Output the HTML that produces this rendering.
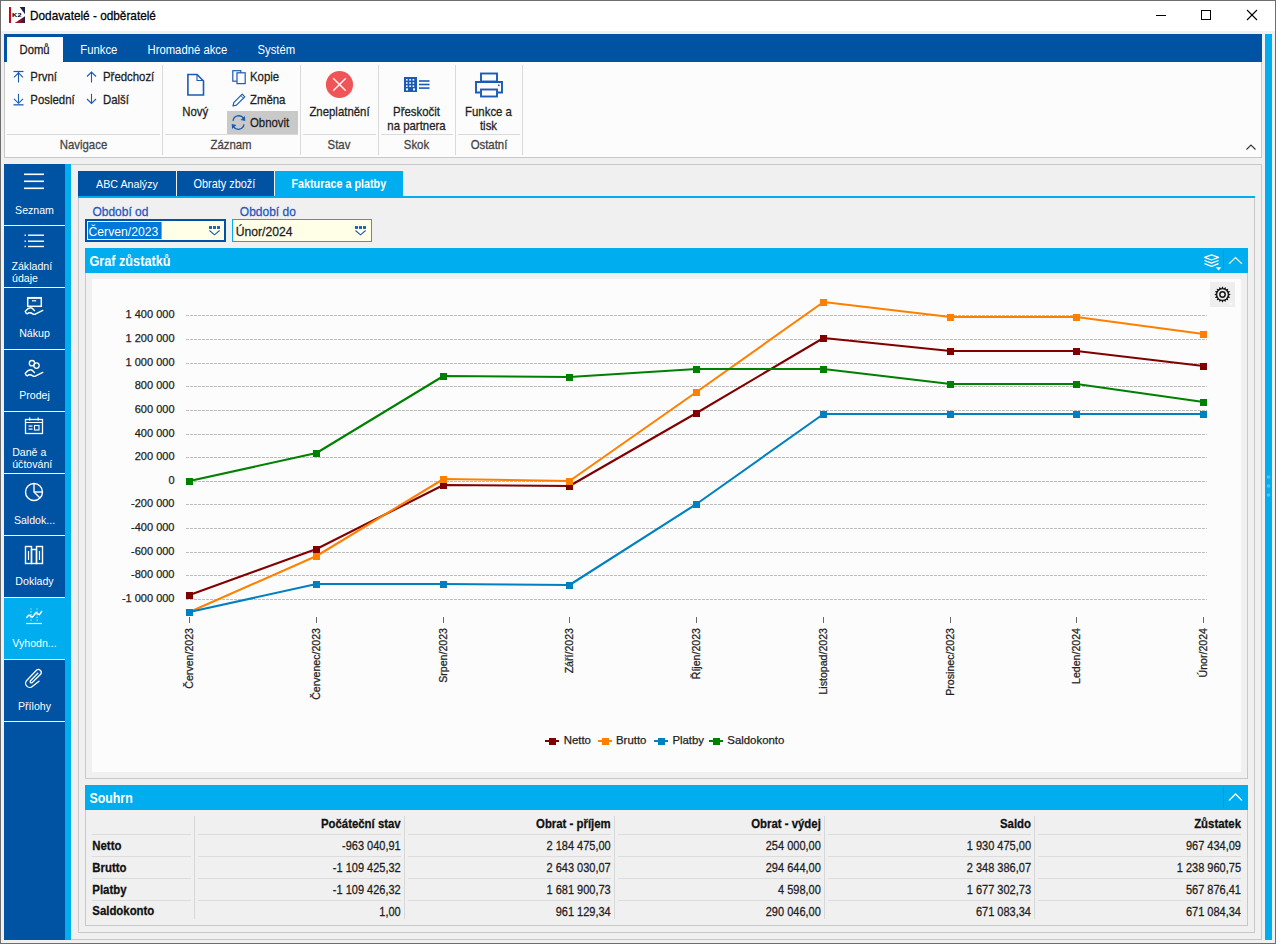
<!DOCTYPE html>
<html><head><meta charset="utf-8"><title>Dodavatelé - odběratelé</title>
<style>
html,body{margin:0;padding:0;width:1276px;height:944px;overflow:hidden;background:#F0F0F0}
body{position:relative;font-family:"Liberation Sans",sans-serif}
body>div{position:absolute}
.t{white-space:nowrap;-webkit-text-stroke:0.25px currentColor}
</style></head><body>
<div style="left:0px;top:0px;width:1276px;height:31px;background:#FFFFFF;"></div>
<div style="left:0px;top:31px;width:1276px;height:913px;background:#F0F0F0;"></div>
<svg style="position:absolute;left:9px;top:7px;" width="16" height="16" viewBox="0 0 16 16"><defs><linearGradient id="k2g" x1="0" y1="0" x2="1" y2="0"><stop offset="0" stop-color="#E0101A"/><stop offset="1" stop-color="#2A1A40"/></linearGradient></defs><rect x="0" y="0" width="2" height="16" fill="#D0001A"/><polygon points="10.7,0 16,0 16,7.2" fill="#1E1E4A"/><polygon points="5.7,16 16,9.2 16,16" fill="url(#k2g)"/><text x="3.1" y="9.9" font-family="Liberation Sans" font-weight="bold" font-size="5.6" fill="#000" textLength="9.4" lengthAdjust="spacingAndGlyphs">K2</text></svg>
<div class="t" style="left:30px;top:10.51px;font-size:11.8px;line-height:11.8px;color:#000;font-weight:normal;transform:scaleY(1.1);transform-origin:0 9.99px;">Dodavatelé - odběratelé</div>
<svg style="position:absolute;left:1150px;top:5px;" width="110" height="22" viewBox="0 0 110 22"><line x1="6" y1="10.5" x2="16" y2="10.5" stroke="#000" stroke-width="1"/><rect x="51.5" y="5.5" width="9" height="9" fill="none" stroke="#000" stroke-width="1"/><line x1="97" y1="5" x2="107" y2="15" stroke="#000" stroke-width="1.1"/><line x1="107" y1="5" x2="97" y2="15" stroke="#000" stroke-width="1.1"/></svg>
<div style="left:4px;top:34px;width:1258px;height:28px;background:#0052A3;"></div>
<div style="left:7px;top:37px;width:56px;height:25px;background:#FCFCFC;"></div>
<div class="t" style="left:19.5px;top:44.93px;font-size:11.3px;line-height:11.3px;color:#1E1E1E;font-weight:normal;transform:scaleY(1.1);transform-origin:0 9.57px;">Domů</div>
<div class="t" style="left:80.3px;top:44.93px;font-size:11.3px;line-height:11.3px;color:#fff;font-weight:normal;transform:scaleY(1.1);transform-origin:0 9.57px;-webkit-text-stroke:0;">Funkce</div>
<div class="t" style="left:147.5px;top:44.93px;font-size:11.3px;line-height:11.3px;color:#fff;font-weight:normal;transform:scaleY(1.1);transform-origin:0 9.57px;-webkit-text-stroke:0;">Hromadné akce</div>
<div class="t" style="left:257.5px;top:44.93px;font-size:11.3px;line-height:11.3px;color:#fff;font-weight:normal;transform:scaleY(1.1);transform-origin:0 9.57px;-webkit-text-stroke:0;">Systém</div>
<div style="left:4px;top:62px;width:1258px;height:96px;background:#FCFCFC;box-sizing:border-box;border:1px solid #C8C8C8;border-top:none"></div>
<div style="left:162px;top:65px;width:1px;height:90px;background:#DADADA;"></div>
<div style="left:300px;top:65px;width:1px;height:90px;background:#DADADA;"></div>
<div style="left:378px;top:65px;width:1px;height:90px;background:#DADADA;"></div>
<div style="left:455px;top:65px;width:1px;height:90px;background:#DADADA;"></div>
<div style="left:522px;top:65px;width:1px;height:90px;background:#DADADA;"></div>
<div style="left:7px;top:134px;width:153px;height:1px;background:#DADADA;"></div>
<div style="left:165px;top:134px;width:133px;height:1px;background:#DADADA;"></div>
<div style="left:303px;top:134px;width:73px;height:1px;background:#DADADA;"></div>
<div style="left:381px;top:134px;width:72px;height:1px;background:#DADADA;"></div>
<div style="left:458px;top:134px;width:62px;height:1px;background:#DADADA;"></div>
<div class="t" style="left:-66.5px;width:300px;top:139.85px;text-align:center;font-size:11.4px;line-height:11.4px;color:#444444;font-weight:normal;transform:scaleY(1.1);transform-origin:0 9.65px;">Navigace</div>
<div class="t" style="left:81px;width:300px;top:139.85px;text-align:center;font-size:11.4px;line-height:11.4px;color:#444444;font-weight:normal;transform:scaleY(1.1);transform-origin:0 9.65px;">Záznam</div>
<div class="t" style="left:189px;width:300px;top:139.85px;text-align:center;font-size:11.4px;line-height:11.4px;color:#444444;font-weight:normal;transform:scaleY(1.1);transform-origin:0 9.65px;">Stav</div>
<div class="t" style="left:266.5px;width:300px;top:139.85px;text-align:center;font-size:11.4px;line-height:11.4px;color:#444444;font-weight:normal;transform:scaleY(1.1);transform-origin:0 9.65px;">Skok</div>
<div class="t" style="left:339px;width:300px;top:139.85px;text-align:center;font-size:11.4px;line-height:11.4px;color:#444444;font-weight:normal;transform:scaleY(1.1);transform-origin:0 9.65px;">Ostatní</div>
<svg style="position:absolute;left:13px;top:69px;" width="12" height="15" viewBox="0 0 12 15"><line x1="0.5" y1="2.5" x2="10.5" y2="2.5" stroke="#1A5BB5" stroke-width="1.2"/><line x1="5.5" y1="3" x2="5.5" y2="13.5" stroke="#1A5BB5" stroke-width="1.1"/><polyline points="1,8.3 5.5,3.8 10,8.3" fill="none" stroke="#1A5BB5" stroke-width="1.1"/></svg>
<div class="t" style="left:30.3px;top:72.35px;font-size:11.4px;line-height:11.4px;color:#1E1E1E;font-weight:normal;transform:scaleY(1.1);transform-origin:0 9.65px;">První</div>
<svg style="position:absolute;left:13px;top:92px;" width="12" height="15" viewBox="0 0 12 15"><line x1="0.5" y1="12.8" x2="10.5" y2="12.8" stroke="#1A5BB5" stroke-width="1.6" opacity="0.8"/><line x1="5.5" y1="1.8" x2="5.5" y2="11" stroke="#1A5BB5" stroke-width="1.1"/><polyline points="1,6.8 5.5,11.3 10,6.8" fill="none" stroke="#1A5BB5" stroke-width="1.1"/></svg>
<div class="t" style="left:30.3px;top:94.85px;font-size:11.4px;line-height:11.4px;color:#1E1E1E;font-weight:normal;transform:scaleY(1.1);transform-origin:0 9.65px;">Poslední</div>
<svg style="position:absolute;left:86px;top:69px;" width="12" height="15" viewBox="0 0 12 15"><line x1="5.5" y1="3" x2="5.5" y2="13.5" stroke="#1A5BB5" stroke-width="1.1"/><polyline points="1,7.5 5.5,3 10,7.5" fill="none" stroke="#1A5BB5" stroke-width="1.1"/></svg>
<div class="t" style="left:103px;top:72.35px;font-size:11.4px;line-height:11.4px;color:#1E1E1E;font-weight:normal;transform:scaleY(1.1);transform-origin:0 9.65px;">Předchozí</div>
<svg style="position:absolute;left:86px;top:92px;" width="12" height="15" viewBox="0 0 12 15"><line x1="5.5" y1="1.8" x2="5.5" y2="11.5" stroke="#1A5BB5" stroke-width="1.1"/><polyline points="1,7 5.5,11.5 10,7" fill="none" stroke="#1A5BB5" stroke-width="1.1"/></svg>
<div class="t" style="left:103px;top:94.85px;font-size:11.4px;line-height:11.4px;color:#1E1E1E;font-weight:normal;transform:scaleY(1.1);transform-origin:0 9.65px;">Další</div>
<svg style="position:absolute;left:185px;top:72px;" width="22" height="26" viewBox="0 0 22 26"><path d="M2.9 2.5 H12 L18.5 9 V23 H2.9 Z" fill="none" stroke="#1A5BB5" stroke-width="1.6"/><path d="M12 2.5 V8.5 H18.5" fill="none" stroke="#1A5BB5" stroke-width="1.1"/></svg>
<div class="t" style="left:182.3px;top:106.85px;font-size:11.4px;line-height:11.4px;color:#1E1E1E;font-weight:normal;transform:scaleY(1.1);transform-origin:0 9.65px;">Nový</div>
<svg style="position:absolute;left:231px;top:69px;" width="16" height="17" viewBox="0 0 16 17"><rect x="1.8" y="1.7" width="8" height="10.5" fill="none" stroke="#1A5BB5" stroke-width="1.2"/><rect x="6" y="3.8" width="8.2" height="10.8" fill="#FCFCFC" stroke="#1A5BB5" stroke-width="1.2"/></svg>
<div class="t" style="left:250px;top:72.35px;font-size:11.4px;line-height:11.4px;color:#1E1E1E;font-weight:normal;transform:scaleY(1.1);transform-origin:0 9.65px;">Kopie</div>
<svg style="position:absolute;left:231px;top:93px;" width="15" height="15" viewBox="0 0 15 15"><path d="M2 13 L2.8 9.6 L11.2 1.2 L13.8 3.8 L5.4 12.2 Z" fill="none" stroke="#1A5BB5" stroke-width="1.2" stroke-linejoin="round"/><line x1="9.8" y1="2.6" x2="12.4" y2="5.2" stroke="#1A5BB5" stroke-width="0.9"/></svg>
<div class="t" style="left:250px;top:94.85px;font-size:11.4px;line-height:11.4px;color:#1E1E1E;font-weight:normal;transform:scaleY(1.1);transform-origin:0 9.65px;">Změna</div>
<div style="left:227px;top:111px;width:71px;height:23px;background:#C9C9C9;"></div>
<svg style="position:absolute;left:231px;top:114px;" width="16" height="16" viewBox="0 0 16 16"><path d="M2 6.8 A5.8 5.8 0 0 1 12.6 4.4" fill="none" stroke="#1A5BB5" stroke-width="1.3"/><polygon points="13.9,2 14.3,7 9.6,6" fill="#1A5BB5"/><path d="M13 10.4 A5.8 5.8 0 0 1 2.4 12.6" fill="none" stroke="#1A5BB5" stroke-width="1.3"/><polygon points="1.1,15 0.7,10 5.4,11" fill="#1A5BB5"/></svg>
<div class="t" style="left:250px;top:117.85px;font-size:11.4px;line-height:11.4px;color:#1E1E1E;font-weight:normal;transform:scaleY(1.1);transform-origin:0 9.65px;">Obnovit</div>
<svg style="position:absolute;left:325px;top:70px;" width="29" height="29" viewBox="0 0 29 29"><circle cx="14.5" cy="14.5" r="13.6" fill="#F05456"/><line x1="8.2" y1="8.2" x2="20.8" y2="20.8" stroke="#fff" stroke-width="1.4"/><line x1="20.8" y1="8.2" x2="8.2" y2="20.8" stroke="#fff" stroke-width="1.4"/></svg>
<div class="t" style="left:189.5px;width:300px;top:106.85px;text-align:center;font-size:11.4px;line-height:11.4px;color:#1E1E1E;font-weight:normal;transform:scaleY(1.1);transform-origin:0 9.65px;">Zneplatnění</div>
<svg style="position:absolute;left:403px;top:76px;" width="28" height="17" viewBox="0 0 28 17"><rect x="1" y="1" width="13" height="15" fill="#1A5BB5"/><rect x="3.0" y="3.0" width="1.6" height="1.6" fill="#fff"/><rect x="3.0" y="6.2" width="1.6" height="1.6" fill="#fff"/><rect x="3.0" y="9.4" width="1.6" height="1.6" fill="#fff"/><rect x="6.3" y="3.0" width="1.6" height="1.6" fill="#fff"/><rect x="6.3" y="6.2" width="1.6" height="1.6" fill="#fff"/><rect x="6.3" y="9.4" width="1.6" height="1.6" fill="#fff"/><rect x="9.6" y="3.0" width="1.6" height="1.6" fill="#fff"/><rect x="9.6" y="6.2" width="1.6" height="1.6" fill="#fff"/><rect x="9.6" y="9.4" width="1.6" height="1.6" fill="#fff"/><rect x="3" y="12.4" width="2" height="2" fill="#fff"/><rect x="10" y="12.4" width="2" height="2" fill="#fff"/><rect x="16" y="4.2" width="10.5" height="1.6" fill="#1A5BB5"/><rect x="16" y="7.7" width="10.5" height="1.6" fill="#1A5BB5"/><rect x="16" y="11.3" width="10.5" height="1.6" fill="#1A5BB5"/></svg>
<div class="t" style="left:266.5px;width:300px;top:106.85px;text-align:center;font-size:11.4px;line-height:11.4px;color:#1E1E1E;font-weight:normal;transform:scaleY(1.1);transform-origin:0 9.65px;">Přeskočit</div>
<div class="t" style="left:266.5px;width:300px;top:121.15px;text-align:center;font-size:11.4px;line-height:11.4px;color:#1E1E1E;font-weight:normal;transform:scaleY(1.1);transform-origin:0 9.65px;">na partnera</div>
<svg style="position:absolute;left:473px;top:71px;" width="32" height="28" viewBox="0 0 32 28"><rect x="8" y="2.5" width="16" height="8" fill="none" stroke="#1A5BB5" stroke-width="1.9"/><path d="M7 21.5 H3 V11 H29 V21.5 H25" fill="none" stroke="#1A5BB5" stroke-width="1.9"/><rect x="8" y="18.5" width="16" height="7" fill="#FCFCFC" stroke="#1A5BB5" stroke-width="1.9"/><rect x="25" y="13.5" width="1.6" height="1.6" fill="#1A5BB5"/></svg>
<div class="t" style="left:338.5px;width:300px;top:106.85px;text-align:center;font-size:11.4px;line-height:11.4px;color:#1E1E1E;font-weight:normal;transform:scaleY(1.1);transform-origin:0 9.65px;">Funkce a</div>
<div class="t" style="left:338.5px;width:300px;top:121.15px;text-align:center;font-size:11.4px;line-height:11.4px;color:#1E1E1E;font-weight:normal;transform:scaleY(1.1);transform-origin:0 9.65px;">tisk</div>
<svg style="position:absolute;left:1245px;top:143px;" width="12" height="8" viewBox="0 0 12 8"><polyline points="1.5,6.5 6,2 10.5,6.5" fill="none" stroke="#333" stroke-width="1.1"/></svg>
<div style="left:1265px;top:34px;width:7px;height:906px;background:#00ADEF;"></div>
<svg style="position:absolute;left:1265px;top:470px;" width="7" height="32" viewBox="0 0 7 32"><circle cx="3.5" cy="7" r="1.8" fill="#4CC6F4"/><circle cx="3.5" cy="16" r="1.8" fill="#4CC6F4"/><circle cx="3.5" cy="25" r="1.8" fill="#4CC6F4"/></svg>
<div style="left:4px;top:164px;width:61px;height:776px;background:#0052A3;"></div>
<div style="left:65px;top:164px;width:6px;height:776px;background:#00ADEF;"></div>
<div style="left:4px;top:597px;width:61px;height:62px;background:#00ADEF;"></div>
<div style="left:4px;top:225px;width:61px;height:1px;background:#FFFFFF;"></div>
<div style="left:4px;top:287px;width:61px;height:1px;background:#FFFFFF;"></div>
<div style="left:4px;top:349px;width:61px;height:1px;background:#FFFFFF;"></div>
<div style="left:4px;top:411px;width:61px;height:1px;background:#FFFFFF;"></div>
<div style="left:4px;top:473px;width:61px;height:1px;background:#FFFFFF;"></div>
<div style="left:4px;top:535px;width:61px;height:1px;background:#FFFFFF;"></div>
<div style="left:4px;top:597px;width:61px;height:1px;background:#FFFFFF;"></div>
<div style="left:4px;top:659px;width:61px;height:1px;background:#FFFFFF;"></div>
<div style="left:4px;top:721px;width:61px;height:1px;background:#FFFFFF;"></div>
<svg style="position:absolute;left:20px;top:170px;" width="28" height="24" viewBox="0 0 28 24"><rect x="4" y="3.5" width="20" height="1.6" fill="#fff"/><rect x="4" y="10.5" width="20" height="1.6" fill="#fff"/><rect x="4" y="17.5" width="20" height="1.6" fill="#fff"/></svg>
<div class="t" style="left:-115.5px;width:300px;top:204.63px;text-align:center;font-size:10.6px;line-height:10.6px;color:#FFFFFF;font-weight:normal;-webkit-text-stroke:0;">Seznam</div>
<svg style="position:absolute;left:20px;top:230px;" width="28" height="22" viewBox="0 0 28 22"><rect x="4.5" y="4.5" width="1.4" height="1.4" fill="#fff"/><rect x="8" y="4.5" width="16" height="1.4" fill="#fff"/><rect x="4.5" y="10.5" width="1.4" height="1.4" fill="#fff"/><rect x="8" y="10.5" width="16" height="1.4" fill="#fff"/><rect x="4.5" y="15.8" width="1.4" height="1.4" fill="#fff"/><rect x="8" y="15.8" width="16" height="1.4" fill="#fff"/></svg>
<div class="t" style="left:11.5px;top:260.53px;font-size:10.6px;line-height:10.6px;color:#FFFFFF;font-weight:normal;-webkit-text-stroke:0;">Základní</div>
<div class="t" style="left:12px;top:273.03px;font-size:10.6px;line-height:10.6px;color:#FFFFFF;font-weight:normal;-webkit-text-stroke:0;">údaje</div>
<svg style="position:absolute;left:20px;top:292px;" width="28" height="28" viewBox="0 0 28 28"><rect x="7.7" y="5.7" width="13.6" height="8.6" fill="none" stroke="#fff" stroke-width="1.5"/><rect x="7" y="5" width="15" height="1.8" fill="#fff"/><line x1="12" y1="8.8" x2="16.2" y2="8.8" stroke="#fff" stroke-width="1.2"/><path d="M14.5 18.6 C13 16.6, 11.6 15.6, 10.4 15.8 C8.5 16, 6.5 17.8, 5.2 19.4 C5.6 20.8, 6.6 21.8, 7.4 21.7 C8.6 20.6, 9.8 20.4, 11.2 21 C12.6 21.7, 13.6 22.6, 14.8 22.4 L22.8 18.4" fill="none" stroke="#fff" stroke-width="1.4" stroke-linejoin="round" stroke-linecap="round"/></svg>
<div class="t" style="left:-115.5px;width:300px;top:328.13px;text-align:center;font-size:10.6px;line-height:10.6px;color:#FFFFFF;font-weight:normal;-webkit-text-stroke:0;">Nákup</div>
<svg style="position:absolute;left:20px;top:354px;" width="28" height="28" viewBox="0 0 28 28"><circle cx="12" cy="9.2" r="2.7" fill="none" stroke="#fff" stroke-width="1.3"/><circle cx="16.5" cy="11.6" r="2.7" fill="none" stroke="#fff" stroke-width="1.3"/><path d="M14.5 18.6 C13 16.6, 11.6 15.6, 10.4 15.8 C8.5 16, 6.5 17.8, 5.2 19.4 C5.6 20.8, 6.6 21.8, 7.4 21.7 C8.6 20.6, 9.8 20.4, 11.2 21 C12.6 21.7, 13.6 22.6, 14.8 22.4 L22.8 18.4" fill="none" stroke="#fff" stroke-width="1.4" stroke-linejoin="round" stroke-linecap="round"/></svg>
<div class="t" style="left:-115.5px;width:300px;top:389.93px;text-align:center;font-size:10.6px;line-height:10.6px;color:#FFFFFF;font-weight:normal;-webkit-text-stroke:0;">Prodej</div>
<svg style="position:absolute;left:20px;top:416px;" width="28" height="22" viewBox="0 0 28 22"><rect x="5.5" y="3.5" width="17" height="14" fill="none" stroke="#fff" stroke-width="1.3"/><line x1="5.5" y1="6.5" x2="22.5" y2="6.5" stroke="#fff" stroke-width="1"/><rect x="9" y="1.5" width="1.3" height="3" fill="#fff"/><rect x="17.5" y="1.5" width="1.3" height="3" fill="#fff"/><rect x="8.5" y="9.5" width="4" height="1.2" fill="#fff"/><rect x="8.5" y="12.5" width="4" height="1.2" fill="#fff"/><rect x="14.5" y="9.5" width="4.5" height="4.5" fill="none" stroke="#fff" stroke-width="1.1"/></svg>
<div class="t" style="left:12.2px;top:446.73px;font-size:10.6px;line-height:10.6px;color:#FFFFFF;font-weight:normal;-webkit-text-stroke:0;">Daně a</div>
<div class="t" style="left:12.2px;top:458.53px;font-size:10.6px;line-height:10.6px;color:#FFFFFF;font-weight:normal;-webkit-text-stroke:0;">účtování</div>
<svg style="position:absolute;left:20px;top:480px;" width="28" height="24" viewBox="0 0 28 24"><circle cx="14" cy="12" r="8.5" fill="none" stroke="#fff" stroke-width="1.4"/><polyline points="14,3.5 14,12 20,18" fill="none" stroke="#fff" stroke-width="1.4"/><line x1="14" y1="12" x2="22.5" y2="12" stroke="#fff" stroke-width="1.4"/></svg>
<div class="t" style="left:-115.5px;width:300px;top:514.53px;text-align:center;font-size:10.6px;line-height:10.6px;color:#FFFFFF;font-weight:normal;-webkit-text-stroke:0;">Saldok...</div>
<svg style="position:absolute;left:20px;top:543px;" width="28" height="24" viewBox="0 0 28 24"><rect x="5.5" y="3.5" width="6" height="17" fill="none" stroke="#fff" stroke-width="1.4"/><rect x="11.5" y="6.5" width="5" height="14" fill="none" stroke="#fff" stroke-width="1.4"/><rect x="16.5" y="3.5" width="6" height="17" fill="none" stroke="#fff" stroke-width="1.4"/><line x1="8.5" y1="8" x2="8.5" y2="17" stroke="#fff" stroke-width="1.2"/><line x1="19.5" y1="8" x2="19.5" y2="17" stroke="#fff" stroke-width="1.2"/></svg>
<div class="t" style="left:-115.5px;width:300px;top:575.93px;text-align:center;font-size:10.6px;line-height:10.6px;color:#FFFFFF;font-weight:normal;-webkit-text-stroke:0;">Doklady</div>
<svg style="position:absolute;left:20px;top:602px;" width="28" height="28" viewBox="0 0 28 28"><line x1="11" y1="6.4" x2="11" y2="19.6" stroke="#fff" stroke-width="1.2" stroke-dasharray="1.2 1.6" opacity="0.75"/><line x1="17.1" y1="6.4" x2="17.1" y2="19.6" stroke="#fff" stroke-width="1.2" stroke-dasharray="1.2 1.6" opacity="0.75"/><polyline points="6.7,15.4 8.9,13.1 12.5,15.1 16,10.5 19.3,12.8 21.7,9.3" fill="none" stroke="#fff" stroke-width="1.4" stroke-linejoin="round" stroke-linecap="round"/><line x1="6.1" y1="21.5" x2="22" y2="21.5" stroke="#fff" stroke-width="1.2"/></svg>
<div class="t" style="left:-115.5px;width:300px;top:637.83px;text-align:center;font-size:10.6px;line-height:10.6px;color:#FFFFFF;font-weight:normal;-webkit-text-stroke:0;">Vyhodn...</div>
<svg style="position:absolute;left:20px;top:664px;" width="28" height="28" viewBox="0 0 28 28"><path d="M19 17.2 L12.6 22.2 A4.1 4.1 0 0 1 6.9 16.3 L16.4 6.2 A3 3 0 0 1 20.9 10 L12 18.8 A1.3 1.3 0 0 1 10.3 17 L17.8 9.2" fill="none" stroke="#fff" stroke-width="1.3" stroke-linecap="round"/></svg>
<div class="t" style="left:-115.5px;width:300px;top:700.73px;text-align:center;font-size:10.6px;line-height:10.6px;color:#FFFFFF;font-weight:normal;-webkit-text-stroke:0;">Přílohy</div>
<div style="left:71px;top:164px;width:1191px;height:776px;background:#F0F0F0;box-sizing:border-box;border:1px solid #C8C8C8;border-left:none"></div>
<div style="left:78px;top:171px;width:98px;height:25px;background:#0052A3;"></div>
<div style="left:177px;top:171px;width:97px;height:25px;background:#0052A3;"></div>
<div style="left:275px;top:171px;width:128px;height:25px;background:#00ADEF;"></div>
<div style="left:78px;top:196px;width:1177px;height:2px;background:#00ADEF;"></div>
<div class="t" style="left:96.1px;top:179.24px;font-size:10.7px;line-height:10.7px;color:#fff;font-weight:normal;transform:scaleY(1.1);transform-origin:0 9.06px;-webkit-text-stroke:0;">ABC Analýzy</div>
<div class="t" style="left:193.6px;top:179.07px;font-size:10.9px;line-height:10.9px;color:#fff;font-weight:normal;transform:scaleY(1.1);transform-origin:0 9.23px;-webkit-text-stroke:0;">Obraty zboží</div>
<div class="t" style="left:291.4px;top:179.16px;font-size:10.8px;line-height:10.8px;color:#fff;font-weight:bold;transform:scaleY(1.1);transform-origin:0 9.14px;-webkit-text-stroke:0;">Fakturace a platby</div>
<div style="left:78px;top:198px;width:1177px;height:735px;background:#F0F0F0;box-sizing:border-box;border:1px solid #C8C8C8;border-top:none"></div>
<div class="t" style="left:92.4px;top:205.94px;font-size:12px;line-height:12px;color:#1F55C0;font-weight:normal;transform:scaleY(1.1);transform-origin:0 10.16px;">Období od</div>
<div class="t" style="left:239.8px;top:205.94px;font-size:12px;line-height:12px;color:#1F55C0;font-weight:normal;transform:scaleY(1.1);transform-origin:0 10.16px;">Období do</div>
<div style="left:85px;top:219px;width:141px;height:23px;background:#FFFFE8;box-sizing:border-box;border:2px solid #0052A3"></div>
<div style="left:88px;top:222px;width:73px;height:17px;background:#0078D7;"></div>
<div style="left:161px;top:222px;width:1px;height:17px;background:#FF8C00;"></div>
<div class="t" style="left:88.5px;top:225.87px;font-size:12.2px;line-height:12.2px;color:#fff;font-weight:normal;transform:scaleY(1.1);transform-origin:0 10.33px;-webkit-text-stroke:0;">Červen/2023</div>
<div style="left:232px;top:219px;width:140px;height:23px;background:#FFFFE8;box-sizing:border-box;border:1px solid #00ADEF"></div>
<div class="t" style="left:235.7px;top:225.87px;font-size:12.2px;line-height:12.2px;color:#1E1E1E;font-weight:normal;transform:scaleY(1.1);transform-origin:0 10.33px;">Únor/2024</div>
<svg style="position:absolute;left:208px;top:226px;" width="13" height="11" viewBox="0 0 13 11"><rect x="1.5" y="0.6" width="2" height="1.8" fill="none" stroke="#1A5BB5" stroke-width="1"/><rect x="5.5" y="0.6" width="2" height="1.8" fill="none" stroke="#1A5BB5" stroke-width="1"/><rect x="9.5" y="0.6" width="2" height="1.8" fill="none" stroke="#1A5BB5" stroke-width="1"/><polyline points="1.5,4.5 6.5,8.8 11.6,4.5" fill="none" stroke="#1A5BB5" stroke-width="1.1"/></svg>
<svg style="position:absolute;left:354px;top:226px;" width="13" height="11" viewBox="0 0 13 11"><rect x="1.5" y="0.6" width="2" height="1.8" fill="none" stroke="#1A5BB5" stroke-width="1"/><rect x="5.5" y="0.6" width="2" height="1.8" fill="none" stroke="#1A5BB5" stroke-width="1"/><rect x="9.5" y="0.6" width="2" height="1.8" fill="none" stroke="#1A5BB5" stroke-width="1"/><polyline points="1.5,4.5 6.5,8.8 11.6,4.5" fill="none" stroke="#1A5BB5" stroke-width="1.1"/></svg>
<div style="left:85px;top:248px;width:1163px;height:25px;background:#00ADEF;"></div>
<div class="t" style="left:89.4px;top:256.25px;font-size:12.7px;line-height:12.7px;color:#fff;font-weight:bold;transform:scaleY(1.1);transform-origin:0 10.75px;-webkit-text-stroke:0;">Graf zůstatků</div>
<svg style="position:absolute;left:1203px;top:253px;" width="20" height="19" viewBox="0 0 20 19"><path d="M1.5 4.4 L8.5 1.9 L15.6 4.4 L8.5 7 Z" fill="none" stroke="#fff" stroke-width="1.3" stroke-linejoin="round"/><path d="M1.5 7.5 L8.5 10.2 L15.6 7.5" fill="none" stroke="#fff" stroke-width="1.3" stroke-linejoin="round"/><path d="M1.5 10.7 L8.5 13.4 L15.6 10.7" fill="none" stroke="#fff" stroke-width="1.3" stroke-linejoin="round"/><polygon points="12.8,14.2 18.3,14.2 15.55,17.5" fill="#fff"/></svg>
<div style="left:1223px;top:250px;width:1px;height:21px;background:#1A8FC0;"></div>
<svg style="position:absolute;left:1227px;top:254px;" width="17" height="12" viewBox="0 0 17 12"><polyline points="2,9.9 8.5,3.6 15,9.9" fill="none" stroke="#fff" stroke-width="1.2"/></svg>
<div style="left:85px;top:273px;width:1163px;height:506px;background:#F0F0F0;box-sizing:border-box;border:1px solid #C8C8C8;border-top:none"></div>
<div style="left:92px;top:279px;width:1149px;height:493px;background:#FCFCFC;"></div>
<div style="left:1210px;top:282px;width:25px;height:25px;background:#EEEEEE;"></div>
<svg style="position:absolute;left:0;top:0" width="1276" height="944" viewBox="0 0 1276 944"><line x1="186" y1="315.5" x2="1207" y2="315.5" stroke="#BEBEBE" stroke-width="1" stroke-dasharray="3 1"/><line x1="186" y1="339.5" x2="1207" y2="339.5" stroke="#BEBEBE" stroke-width="1" stroke-dasharray="3 1"/><line x1="186" y1="363.5" x2="1207" y2="363.5" stroke="#BEBEBE" stroke-width="1" stroke-dasharray="3 1"/><line x1="186" y1="386.5" x2="1207" y2="386.5" stroke="#BEBEBE" stroke-width="1" stroke-dasharray="3 1"/><line x1="186" y1="410.5" x2="1207" y2="410.5" stroke="#BEBEBE" stroke-width="1" stroke-dasharray="3 1"/><line x1="186" y1="434.5" x2="1207" y2="434.5" stroke="#BEBEBE" stroke-width="1" stroke-dasharray="3 1"/><line x1="186" y1="457.5" x2="1207" y2="457.5" stroke="#BEBEBE" stroke-width="1" stroke-dasharray="3 1"/><line x1="186" y1="481.5" x2="1207" y2="481.5" stroke="#BEBEBE" stroke-width="1" stroke-dasharray="3 1"/><line x1="186" y1="504.5" x2="1207" y2="504.5" stroke="#BEBEBE" stroke-width="1" stroke-dasharray="3 1"/><line x1="186" y1="528.5" x2="1207" y2="528.5" stroke="#BEBEBE" stroke-width="1" stroke-dasharray="3 1"/><line x1="186" y1="552.5" x2="1207" y2="552.5" stroke="#BEBEBE" stroke-width="1" stroke-dasharray="3 1"/><line x1="186" y1="575.5" x2="1207" y2="575.5" stroke="#BEBEBE" stroke-width="1" stroke-dasharray="3 1"/><line x1="186" y1="599.5" x2="1207" y2="599.5" stroke="#BEBEBE" stroke-width="1" stroke-dasharray="3 1"/><line x1="189.5" y1="617" x2="189.5" y2="623" stroke="#6A6A6A" stroke-width="1"/><line x1="316.5" y1="617" x2="316.5" y2="623" stroke="#6A6A6A" stroke-width="1"/><line x1="443.5" y1="617" x2="443.5" y2="623" stroke="#6A6A6A" stroke-width="1"/><line x1="569.5" y1="617" x2="569.5" y2="623" stroke="#6A6A6A" stroke-width="1"/><line x1="696.5" y1="617" x2="696.5" y2="623" stroke="#6A6A6A" stroke-width="1"/><line x1="823.5" y1="617" x2="823.5" y2="623" stroke="#6A6A6A" stroke-width="1"/><line x1="950.5" y1="617" x2="950.5" y2="623" stroke="#6A6A6A" stroke-width="1"/><line x1="1076.5" y1="617" x2="1076.5" y2="623" stroke="#6A6A6A" stroke-width="1"/><line x1="1203.5" y1="617" x2="1203.5" y2="623" stroke="#6A6A6A" stroke-width="1"/><polyline points="189.5,595 316.5,549 443.5,485 569.5,486 696.5,413 823.5,338 950.5,351 1076.5,351 1203.5,366" fill="none" stroke="#800000" stroke-width="2.1" stroke-linejoin="round"/><rect x="186" y="592" width="7" height="7" fill="#800000"/><rect x="313" y="546" width="7" height="7" fill="#800000"/><rect x="440" y="482" width="7" height="7" fill="#800000"/><rect x="566" y="483" width="7" height="7" fill="#800000"/><rect x="693" y="410" width="7" height="7" fill="#800000"/><rect x="820" y="335" width="7" height="7" fill="#800000"/><rect x="947" y="348" width="7" height="7" fill="#800000"/><rect x="1073" y="348" width="7" height="7" fill="#800000"/><rect x="1200" y="363" width="7" height="7" fill="#800000"/><polyline points="189.5,612 316.5,556 443.5,479 569.5,481 696.5,392 823.5,302 950.5,317 1076.5,317 1203.5,334" fill="none" stroke="#FF8000" stroke-width="2.1" stroke-linejoin="round"/><rect x="186" y="609" width="7" height="7" fill="#FF8000"/><rect x="313" y="553" width="7" height="7" fill="#FF8000"/><rect x="440" y="476" width="7" height="7" fill="#FF8000"/><rect x="566" y="478" width="7" height="7" fill="#FF8000"/><rect x="693" y="389" width="7" height="7" fill="#FF8000"/><rect x="820" y="299" width="7" height="7" fill="#FF8000"/><rect x="947" y="314" width="7" height="7" fill="#FF8000"/><rect x="1073" y="314" width="7" height="7" fill="#FF8000"/><rect x="1200" y="331" width="7" height="7" fill="#FF8000"/><polyline points="189.5,612 316.5,584 443.5,584 569.5,585 696.5,504 823.5,414 950.5,414 1076.5,414 1203.5,414" fill="none" stroke="#0080C0" stroke-width="2.1" stroke-linejoin="round"/><rect x="186" y="609" width="7" height="7" fill="#0080C0"/><rect x="313" y="581" width="7" height="7" fill="#0080C0"/><rect x="440" y="581" width="7" height="7" fill="#0080C0"/><rect x="566" y="582" width="7" height="7" fill="#0080C0"/><rect x="693" y="501" width="7" height="7" fill="#0080C0"/><rect x="820" y="411" width="7" height="7" fill="#0080C0"/><rect x="947" y="411" width="7" height="7" fill="#0080C0"/><rect x="1073" y="411" width="7" height="7" fill="#0080C0"/><rect x="1200" y="411" width="7" height="7" fill="#0080C0"/><polyline points="189.5,481 316.5,453 443.5,376 569.5,377 696.5,369 823.5,369 950.5,384 1076.5,384 1203.5,402" fill="none" stroke="#008000" stroke-width="2.1" stroke-linejoin="round"/><rect x="186" y="478" width="7" height="7" fill="#008000"/><rect x="313" y="450" width="7" height="7" fill="#008000"/><rect x="440" y="373" width="7" height="7" fill="#008000"/><rect x="566" y="374" width="7" height="7" fill="#008000"/><rect x="693" y="366" width="7" height="7" fill="#008000"/><rect x="820" y="366" width="7" height="7" fill="#008000"/><rect x="947" y="381" width="7" height="7" fill="#008000"/><rect x="1073" y="381" width="7" height="7" fill="#008000"/><rect x="1200" y="399" width="7" height="7" fill="#008000"/></svg>
<div class="t" style="right:1101.5px;top:308.69px;text-align:right;font-size:11px;line-height:11px;color:#1E1E1E;font-weight:normal;">1 400 000</div>
<div class="t" style="right:1101.5px;top:332.69px;text-align:right;font-size:11px;line-height:11px;color:#1E1E1E;font-weight:normal;">1 200 000</div>
<div class="t" style="right:1101.5px;top:356.69px;text-align:right;font-size:11px;line-height:11px;color:#1E1E1E;font-weight:normal;">1 000 000</div>
<div class="t" style="right:1101.5px;top:379.69px;text-align:right;font-size:11px;line-height:11px;color:#1E1E1E;font-weight:normal;">800 000</div>
<div class="t" style="right:1101.5px;top:403.69px;text-align:right;font-size:11px;line-height:11px;color:#1E1E1E;font-weight:normal;">600 000</div>
<div class="t" style="right:1101.5px;top:427.69px;text-align:right;font-size:11px;line-height:11px;color:#1E1E1E;font-weight:normal;">400 000</div>
<div class="t" style="right:1101.5px;top:450.69px;text-align:right;font-size:11px;line-height:11px;color:#1E1E1E;font-weight:normal;">200 000</div>
<div class="t" style="right:1101.5px;top:474.69px;text-align:right;font-size:11px;line-height:11px;color:#1E1E1E;font-weight:normal;">0</div>
<div class="t" style="right:1101.5px;top:497.69px;text-align:right;font-size:11px;line-height:11px;color:#1E1E1E;font-weight:normal;">-200 000</div>
<div class="t" style="right:1101.5px;top:521.69px;text-align:right;font-size:11px;line-height:11px;color:#1E1E1E;font-weight:normal;">-400 000</div>
<div class="t" style="right:1101.5px;top:545.69px;text-align:right;font-size:11px;line-height:11px;color:#1E1E1E;font-weight:normal;">-600 000</div>
<div class="t" style="right:1101.5px;top:568.69px;text-align:right;font-size:11px;line-height:11px;color:#1E1E1E;font-weight:normal;">-800 000</div>
<div class="t" style="right:1101.5px;top:592.69px;text-align:right;font-size:11px;line-height:11px;color:#1E1E1E;font-weight:normal;">-1 000 000</div>
<div class="t" style="left:183.9px;top:628px;font-size:10.6px;line-height:11px;color:#1E1E1E;transform-origin:0 0;transform:rotate(-90deg) translateX(-100%);direction:ltr"><span>Červen/2023</span></div>
<div class="t" style="left:310.9px;top:628px;font-size:10.6px;line-height:11px;color:#1E1E1E;transform-origin:0 0;transform:rotate(-90deg) translateX(-100%);direction:ltr"><span>Červenec/2023</span></div>
<div class="t" style="left:437.9px;top:628px;font-size:10.6px;line-height:11px;color:#1E1E1E;transform-origin:0 0;transform:rotate(-90deg) translateX(-100%);direction:ltr"><span>Srpen/2023</span></div>
<div class="t" style="left:563.9px;top:628px;font-size:10.6px;line-height:11px;color:#1E1E1E;transform-origin:0 0;transform:rotate(-90deg) translateX(-100%);direction:ltr"><span>Září/2023</span></div>
<div class="t" style="left:690.9px;top:628px;font-size:10.6px;line-height:11px;color:#1E1E1E;transform-origin:0 0;transform:rotate(-90deg) translateX(-100%);direction:ltr"><span>Říjen/2023</span></div>
<div class="t" style="left:817.9px;top:628px;font-size:10.6px;line-height:11px;color:#1E1E1E;transform-origin:0 0;transform:rotate(-90deg) translateX(-100%);direction:ltr"><span>Listopad/2023</span></div>
<div class="t" style="left:944.9px;top:628px;font-size:10.6px;line-height:11px;color:#1E1E1E;transform-origin:0 0;transform:rotate(-90deg) translateX(-100%);direction:ltr"><span>Prosinec/2023</span></div>
<div class="t" style="left:1070.9px;top:628px;font-size:10.6px;line-height:11px;color:#1E1E1E;transform-origin:0 0;transform:rotate(-90deg) translateX(-100%);direction:ltr"><span>Leden/2024</span></div>
<div class="t" style="left:1197.9px;top:628px;font-size:10.6px;line-height:11px;color:#1E1E1E;transform-origin:0 0;transform:rotate(-90deg) translateX(-100%);direction:ltr"><span>Únor/2024</span></div>
<div style="left:545px;top:740px;width:14px;height:2px;background:#800000;"></div>
<div style="left:549px;top:738px;width:7px;height:7px;background:#800000;"></div>
<div class="t" style="left:563.7px;top:734.85px;font-size:11.4px;line-height:11.4px;color:#1E1E1E;font-weight:normal;">Netto</div>
<div style="left:598px;top:740px;width:14px;height:2px;background:#FF8000;"></div>
<div style="left:602px;top:738px;width:7px;height:7px;background:#FF8000;"></div>
<div class="t" style="left:616px;top:734.85px;font-size:11.4px;line-height:11.4px;color:#1E1E1E;font-weight:normal;">Brutto</div>
<div style="left:654px;top:740px;width:14px;height:2px;background:#0080C0;"></div>
<div style="left:658px;top:738px;width:7px;height:7px;background:#0080C0;"></div>
<div class="t" style="left:672.4px;top:734.85px;font-size:11.4px;line-height:11.4px;color:#1E1E1E;font-weight:normal;">Platby</div>
<div style="left:709px;top:740px;width:14px;height:2px;background:#008000;"></div>
<div style="left:713px;top:738px;width:7px;height:7px;background:#008000;"></div>
<div class="t" style="left:727.3px;top:734.85px;font-size:11.4px;line-height:11.4px;color:#1E1E1E;font-weight:normal;">Saldokonto</div>
<svg style="position:absolute;left:1208px;top:280px;" width="28" height="28" viewBox="0 0 28 28"><polygon points="14.50,6.30 15.71,8.42 17.64,6.92 17.94,9.34 20.30,8.70 19.66,11.06 22.08,11.36 20.58,13.29 22.70,14.50 20.58,15.71 22.08,17.64 19.66,17.94 20.30,20.30 17.94,19.66 17.64,22.08 15.71,20.58 14.50,22.70 13.29,20.58 11.36,22.08 11.06,19.66 8.70,20.30 9.34,17.94 6.92,17.64 8.42,15.71 6.30,14.50 8.42,13.29 6.92,11.36 9.34,11.06 8.70,8.70 11.06,9.34 11.36,6.92 13.29,8.42" fill="#111"/><circle cx="14.5" cy="14.5" r="5.2" fill="#EEEEEE"/><circle cx="14.5" cy="14.5" r="3.4" fill="#111"/><circle cx="14.5" cy="14.5" r="1.9" fill="#EEEEEE"/><polygon points="20.5,23 25,23 22.75,25.3" fill="#FAFAFA"/></svg>
<div style="left:85px;top:785px;width:1163px;height:25px;background:#00ADEF;"></div>
<div class="t" style="left:89.4px;top:792.50px;font-size:12.4px;line-height:12.4px;color:#fff;font-weight:bold;transform:scaleY(1.15);transform-origin:0 10.50px;-webkit-text-stroke:0;">Souhrn</div>
<div style="left:1223px;top:787px;width:1px;height:21px;background:#1A8FC0;"></div>
<svg style="position:absolute;left:1227px;top:791px;" width="17" height="12" viewBox="0 0 17 12"><polyline points="2,9.5 8.5,3 15,9.5" fill="none" stroke="#fff" stroke-width="1.3"/></svg>
<div style="left:85px;top:810px;width:1163px;height:116px;background:#F0F0F0;box-sizing:border-box;border:1px solid #C8C8C8;border-top:none"></div>
<div style="left:194px;top:816px;width:1px;height:103px;background:#D8D8D8;"></div>
<div style="left:404px;top:816px;width:1px;height:103px;background:#D8D8D8;"></div>
<div style="left:614px;top:816px;width:1px;height:103px;background:#D8D8D8;"></div>
<div style="left:824px;top:816px;width:1px;height:103px;background:#D8D8D8;"></div>
<div style="left:1034px;top:816px;width:1px;height:103px;background:#D8D8D8;"></div>
<div style="left:92px;top:834px;width:99px;height:1px;background:#DCDCDC;"></div>
<div style="left:198px;top:834px;width:203px;height:1px;background:#DCDCDC;"></div>
<div style="left:408px;top:834px;width:203px;height:1px;background:#DCDCDC;"></div>
<div style="left:618px;top:834px;width:203px;height:1px;background:#DCDCDC;"></div>
<div style="left:828px;top:834px;width:203px;height:1px;background:#DCDCDC;"></div>
<div style="left:1038px;top:834px;width:203px;height:1px;background:#DCDCDC;"></div>
<div style="left:92px;top:856px;width:99px;height:1px;background:#DCDCDC;"></div>
<div style="left:198px;top:856px;width:203px;height:1px;background:#DCDCDC;"></div>
<div style="left:408px;top:856px;width:203px;height:1px;background:#DCDCDC;"></div>
<div style="left:618px;top:856px;width:203px;height:1px;background:#DCDCDC;"></div>
<div style="left:828px;top:856px;width:203px;height:1px;background:#DCDCDC;"></div>
<div style="left:1038px;top:856px;width:203px;height:1px;background:#DCDCDC;"></div>
<div style="left:92px;top:878px;width:99px;height:1px;background:#DCDCDC;"></div>
<div style="left:198px;top:878px;width:203px;height:1px;background:#DCDCDC;"></div>
<div style="left:408px;top:878px;width:203px;height:1px;background:#DCDCDC;"></div>
<div style="left:618px;top:878px;width:203px;height:1px;background:#DCDCDC;"></div>
<div style="left:828px;top:878px;width:203px;height:1px;background:#DCDCDC;"></div>
<div style="left:1038px;top:878px;width:203px;height:1px;background:#DCDCDC;"></div>
<div style="left:92px;top:900px;width:99px;height:1px;background:#DCDCDC;"></div>
<div style="left:198px;top:900px;width:203px;height:1px;background:#DCDCDC;"></div>
<div style="left:408px;top:900px;width:203px;height:1px;background:#DCDCDC;"></div>
<div style="left:618px;top:900px;width:203px;height:1px;background:#DCDCDC;"></div>
<div style="left:828px;top:900px;width:203px;height:1px;background:#DCDCDC;"></div>
<div style="left:1038px;top:900px;width:203px;height:1px;background:#DCDCDC;"></div>
<div class="t" style="right:875.3px;top:818.75px;text-align:right;font-size:11.4px;line-height:11.4px;color:#111;font-weight:bold;transform:scaleY(1.1);transform-origin:0 9.65px;">Počáteční stav</div>
<div class="t" style="right:665.3px;top:818.75px;text-align:right;font-size:11.4px;line-height:11.4px;color:#111;font-weight:bold;transform:scaleY(1.1);transform-origin:0 9.65px;">Obrat - příjem</div>
<div class="t" style="right:455.20000000000005px;top:818.75px;text-align:right;font-size:11.4px;line-height:11.4px;color:#111;font-weight:bold;transform:scaleY(1.1);transform-origin:0 9.65px;">Obrat - výdej</div>
<div class="t" style="right:245px;top:818.75px;text-align:right;font-size:11.4px;line-height:11.4px;color:#111;font-weight:bold;transform:scaleY(1.1);transform-origin:0 9.65px;">Saldo</div>
<div class="t" style="right:35px;top:818.75px;text-align:right;font-size:11.4px;line-height:11.4px;color:#111;font-weight:bold;transform:scaleY(1.1);transform-origin:0 9.65px;">Zůstatek</div>
<div class="t" style="left:92.3px;top:840.65px;font-size:11.4px;line-height:11.4px;color:#111;font-weight:bold;transform:scaleY(1.1);transform-origin:0 9.65px;">Netto</div>
<div class="t" style="right:875.3px;top:840.99px;text-align:right;font-size:11px;line-height:11px;color:#1E1E1E;font-weight:normal;transform:scaleY(1.1);transform-origin:0 9.31px;">-963 040,91</div>
<div class="t" style="right:665.3px;top:840.99px;text-align:right;font-size:11px;line-height:11px;color:#1E1E1E;font-weight:normal;transform:scaleY(1.1);transform-origin:0 9.31px;">2 184 475,00</div>
<div class="t" style="right:455.20000000000005px;top:840.99px;text-align:right;font-size:11px;line-height:11px;color:#1E1E1E;font-weight:normal;transform:scaleY(1.1);transform-origin:0 9.31px;">254 000,00</div>
<div class="t" style="right:245px;top:840.99px;text-align:right;font-size:11px;line-height:11px;color:#1E1E1E;font-weight:normal;transform:scaleY(1.1);transform-origin:0 9.31px;">1 930 475,00</div>
<div class="t" style="right:35px;top:840.99px;text-align:right;font-size:11px;line-height:11px;color:#1E1E1E;font-weight:normal;transform:scaleY(1.1);transform-origin:0 9.31px;">967 434,09</div>
<div class="t" style="left:92.3px;top:862.55px;font-size:11.4px;line-height:11.4px;color:#111;font-weight:bold;transform:scaleY(1.1);transform-origin:0 9.65px;">Brutto</div>
<div class="t" style="right:875.3px;top:862.89px;text-align:right;font-size:11px;line-height:11px;color:#1E1E1E;font-weight:normal;transform:scaleY(1.1);transform-origin:0 9.31px;">-1 109 425,32</div>
<div class="t" style="right:665.3px;top:862.89px;text-align:right;font-size:11px;line-height:11px;color:#1E1E1E;font-weight:normal;transform:scaleY(1.1);transform-origin:0 9.31px;">2 643 030,07</div>
<div class="t" style="right:455.20000000000005px;top:862.89px;text-align:right;font-size:11px;line-height:11px;color:#1E1E1E;font-weight:normal;transform:scaleY(1.1);transform-origin:0 9.31px;">294 644,00</div>
<div class="t" style="right:245px;top:862.89px;text-align:right;font-size:11px;line-height:11px;color:#1E1E1E;font-weight:normal;transform:scaleY(1.1);transform-origin:0 9.31px;">2 348 386,07</div>
<div class="t" style="right:35px;top:862.89px;text-align:right;font-size:11px;line-height:11px;color:#1E1E1E;font-weight:normal;transform:scaleY(1.1);transform-origin:0 9.31px;">1 238 960,75</div>
<div class="t" style="left:92.3px;top:884.65px;font-size:11.4px;line-height:11.4px;color:#111;font-weight:bold;transform:scaleY(1.1);transform-origin:0 9.65px;">Platby</div>
<div class="t" style="right:875.3px;top:884.99px;text-align:right;font-size:11px;line-height:11px;color:#1E1E1E;font-weight:normal;transform:scaleY(1.1);transform-origin:0 9.31px;">-1 109 426,32</div>
<div class="t" style="right:665.3px;top:884.99px;text-align:right;font-size:11px;line-height:11px;color:#1E1E1E;font-weight:normal;transform:scaleY(1.1);transform-origin:0 9.31px;">1 681 900,73</div>
<div class="t" style="right:455.20000000000005px;top:884.99px;text-align:right;font-size:11px;line-height:11px;color:#1E1E1E;font-weight:normal;transform:scaleY(1.1);transform-origin:0 9.31px;">4 598,00</div>
<div class="t" style="right:245px;top:884.99px;text-align:right;font-size:11px;line-height:11px;color:#1E1E1E;font-weight:normal;transform:scaleY(1.1);transform-origin:0 9.31px;">1 677 302,73</div>
<div class="t" style="right:35px;top:884.99px;text-align:right;font-size:11px;line-height:11px;color:#1E1E1E;font-weight:normal;transform:scaleY(1.1);transform-origin:0 9.31px;">567 876,41</div>
<div class="t" style="left:92.3px;top:906.25px;font-size:11.4px;line-height:11.4px;color:#111;font-weight:bold;transform:scaleY(1.1);transform-origin:0 9.65px;">Saldokonto</div>
<div class="t" style="right:875.3px;top:906.59px;text-align:right;font-size:11px;line-height:11px;color:#1E1E1E;font-weight:normal;transform:scaleY(1.1);transform-origin:0 9.31px;">1,00</div>
<div class="t" style="right:665.3px;top:906.59px;text-align:right;font-size:11px;line-height:11px;color:#1E1E1E;font-weight:normal;transform:scaleY(1.1);transform-origin:0 9.31px;">961 129,34</div>
<div class="t" style="right:455.20000000000005px;top:906.59px;text-align:right;font-size:11px;line-height:11px;color:#1E1E1E;font-weight:normal;transform:scaleY(1.1);transform-origin:0 9.31px;">290 046,00</div>
<div class="t" style="right:245px;top:906.59px;text-align:right;font-size:11px;line-height:11px;color:#1E1E1E;font-weight:normal;transform:scaleY(1.1);transform-origin:0 9.31px;">671 083,34</div>
<div class="t" style="right:35px;top:906.59px;text-align:right;font-size:11px;line-height:11px;color:#1E1E1E;font-weight:normal;transform:scaleY(1.1);transform-origin:0 9.31px;">671 084,34</div>
<div style="left:0;top:0;width:1276px;height:944px;box-sizing:border-box;border:1px solid #6E6E6E;background:transparent"></div>
</body></html>
